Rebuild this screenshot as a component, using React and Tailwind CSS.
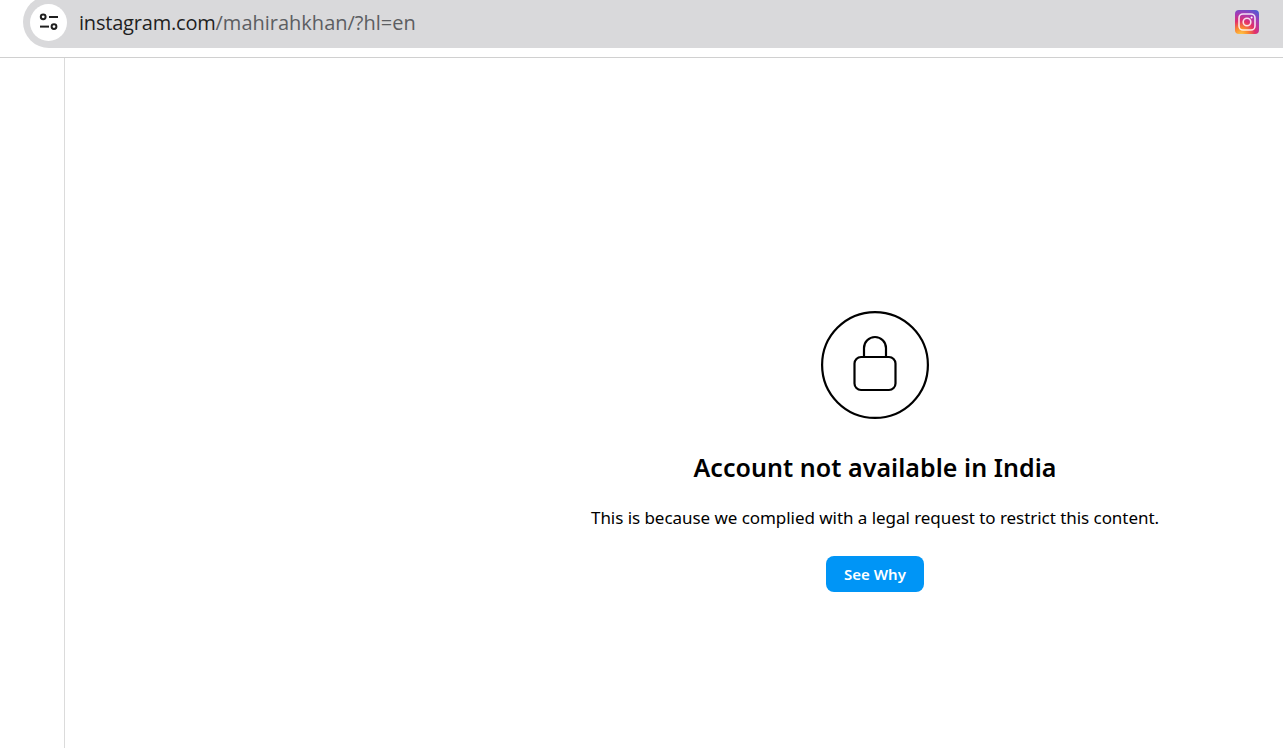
import React from "react";

const TuneIcon = () => (
  <svg width="20" height="20" viewBox="0 0 20 20" fill="none" stroke="#1f1f1f" strokeWidth="2">
    <circle cx="4.2" cy="4.8" r="2.4" />
    <path d="M10 5H19" />
    <circle cx="15" cy="14.6" r="2.4" />
    <path d="M1 14.6h9" />
  </svg>
);

const InstagramIcon = () => (
  <svg width="24" height="24" viewBox="0 0 24 24">
    <defs>
      <radialGradient id="ig" cx="25%" cy="105%" r="120%">
        <stop offset="0" stopColor="#fed14a" />
        <stop offset="0.25" stopColor="#fb8a2e" />
        <stop offset="0.5" stopColor="#e1306c" />
        <stop offset="0.75" stopColor="#a63ab5" />
        <stop offset="1" stopColor="#4f5bd5" />
      </radialGradient>
    </defs>
    <rect x="0" y="0" width="24" height="24" rx="4" fill="url(#ig)" />
    <rect x="4" y="4" width="16" height="16" rx="4" fill="none" stroke="#fff" strokeOpacity="0.85" strokeWidth="1.6" />
    <circle cx="12" cy="12" r="3.8" fill="none" stroke="#fff" strokeOpacity="0.85" strokeWidth="1.6" />
    <circle cx="16.6" cy="7.4" r="1" fill="#fff" />
  </svg>
);

const LockIcon = () => (
  <svg width="108" height="108" viewBox="0 0 108 108" fill="none" stroke="#000" strokeWidth="2.2">
    <circle cx="54" cy="54" r="52.9" />
    <path d="M43 46V37a11 11 0 0 1 22 0V46" />
    <rect x="33.5" y="46" width="41" height="33" rx="6.5" />
  </svg>
);

export default function App() {
  return (
    <div className="h-[748px] flex flex-col overflow-hidden bg-white text-black font-['Noto_Sans','Open_Sans',sans-serif]">
      {/* Address bar */}
      <header className="h-[58px] shrink-0 border-b border-[#d0d0d0] pl-[23px]">
        <div className="h-[52px] -mt-[4px] bg-[#d9d9db] rounded-l-full flex items-center pl-[7px] pr-[24px]">
          <div className="w-[37px] h-[37px] rounded-full bg-white flex items-center justify-center">
            <TuneIcon />
          </div>
          <div className="ml-[12px] pt-[1px] text-[20px] leading-[28px] whitespace-nowrap text-[#5c5e62] font-['Open_Sans',sans-serif]">
            <span className="text-[#1f1f1f] tracking-[-0.2px]">instagram.com</span>/mahirahkhan/?hl=en
          </div>
          <div className="ml-auto">
            <InstagramIcon />
          </div>
        </div>
      </header>

      <div className="flex flex-1">
        {/* Collapsed sidebar */}
        <aside className="w-[65px] shrink-0 border-r border-[#dbdbdb]" />
        <div className="w-[402px] shrink-0" />

        {/* Restricted account message */}
        <main className="flex-1 flex flex-col items-center pt-[253px]">
          <LockIcon />
          <h1 className="mt-[31px] text-[25px] leading-[34px] font-semibold tracking-[0.05px]">Account not available in India</h1>
          <p className="mt-[22px] text-[17px] leading-[24px] tracking-[-0.05px]">
            This is because we complied with a legal request to restrict this content.
          </p>
          <button className="mt-[26px] h-[36px] w-[98px] rounded-lg bg-[#0095f6] text-white text-[15px] font-semibold">
            See Why
          </button>
        </main>
      </div>
    </div>
  );
}
